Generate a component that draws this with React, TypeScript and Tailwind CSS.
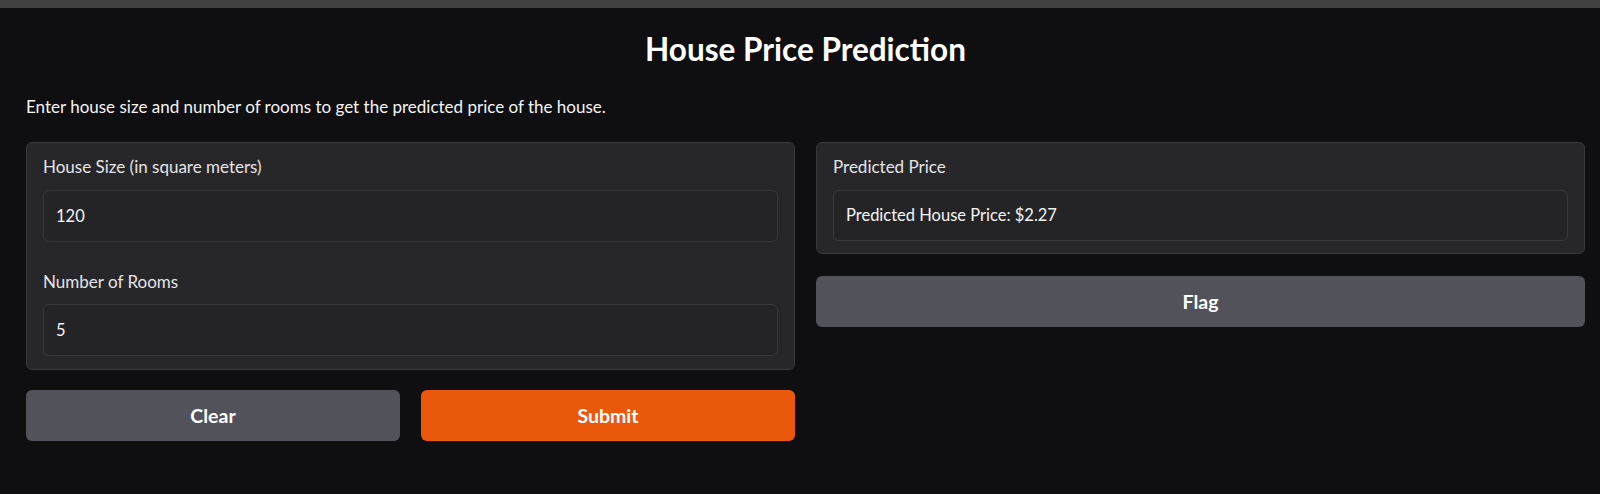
import React from "react";

export default function App() {
  return (
    <div className="min-h-[494px] w-full bg-[#0f0f11] text-[#f4f4f5]" style={{ fontFamily: "Lato, 'Noto Sans', sans-serif" }}>
      <div className="h-[8px] bg-[#414141]" />
      <div className="pl-[26px] pr-[15px]">
        <h1 className="pt-[23px] text-center text-[31.5px] font-bold leading-[36px] text-white">House Price Prediction</h1>
        <p className="mt-[30px] text-[17px] leading-[20px] text-[#f4f4f5]">
          Enter house size and number of rooms to get the predicted price of the house.
        </p>
        <div className="mt-[25px] grid grid-cols-2 gap-x-[21px]">
          <div className="flex flex-col">
            <div className="rounded-[6px] border border-[#38383c] bg-[#27272a] px-[16px] pb-[13px] pt-[14px]">
              <div className="text-[17px] leading-[20px] text-[#e4e4e7]">House Size (in square meters)</div>
              <div className="mt-[13px] flex h-[52px] items-center rounded-[6px] border border-[#38383c] bg-[#242427] px-[12px] text-[16.5px] text-[#f4f4f5]">
                120
              </div>
              <div className="mt-[30px] text-[17px] leading-[20px] text-[#e4e4e7]">Number of Rooms</div>
              <div className="mt-[12px] flex h-[52px] items-center rounded-[6px] border border-[#38383c] bg-[#242427] px-[12px] text-[16.5px] text-[#f4f4f5]">
                5
              </div>
            </div>
            <div className="mt-[20px] grid grid-cols-2 gap-x-[21px]">
              <button className="h-[51px] rounded-[6px] bg-[#52525b] text-[19.5px] font-bold text-white">Clear</button>
              <button className="h-[51px] rounded-[6px] bg-[#ea580c] text-[19.5px] font-bold text-white">Submit</button>
            </div>
          </div>
          <div className="flex flex-col">
            <div className="rounded-[6px] border border-[#38383c] bg-[#27272a] px-[16px] pb-[12px] pt-[14px]">
              <div className="text-[17px] leading-[20px] text-[#e4e4e7]">Predicted Price</div>
              <div className="mt-[13px] flex h-[51px] items-center rounded-[6px] border border-[#38383c] bg-[#242427] px-[12px] text-[16.5px] text-[#f4f4f5]">
                Predicted House Price: $2.27
              </div>
            </div>
            <button className="mt-[22px] h-[51px] rounded-[6px] bg-[#52525b] text-[19.5px] font-bold text-white">Flag</button>
          </div>
        </div>
      </div>
    </div>
  );
}
